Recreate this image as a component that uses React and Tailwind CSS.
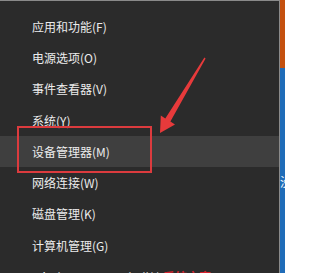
const items = [
  "应用和功能(F)",
  "电源选项(O)",
  "事件查看器(V)",
  "系统(Y)",
  "设备管理器(M)",
  "网络连接(W)",
  "磁盘管理(K)",
  "计算机管理(G)",
  "Windows PowerShell(I)",
];

export default function App() {
  return (
    <div
      className="relative flex h-[273px] w-[285px] overflow-hidden bg-[#2b2b2b]"
      style={{ fontFamily: '"Noto Sans CJK SC", "Liberation Sans", sans-serif' }}
    >
      {/* Context menu */}
      <div className="w-[280px] shrink-0 border-t border-r border-[#8a8a8a] pt-[10px]">
        {items.map((label, i) => (
          <div
            key={label}
            className={`flex h-[31.3px] items-center pl-[32px] text-[12px] text-[#ececec] ${
              i === 4 ? "bg-[#3f3f3f]" : ""
            }`}
          >
            {label}
          </div>
        ))}
      </div>

      {/* Desktop behind */}
      <div className="flex flex-1 flex-col">
        <div className="h-[68px] bg-[#c4500f]" />
        <div className="flex-1 bg-[#1f6cb8] pt-[108px] text-[12px] leading-none text-white">
          没
        </div>
      </div>

      {/* Annotation: red box */}
      <div className="absolute left-[17px] top-[126px] h-[47px] w-[135px] border-2 border-[#dc3b3e]" />

      {/* Annotation: arrow */}
      <svg className="absolute left-0 top-0" width="285" height="273" viewBox="0 0 285 273">
        <polygon
          points="160,133 160.8,115.5 165.3,118.5 204.4,57.6 205.6,58.4 170.4,121.5 175,124.5"
          fill="#e73a3b"
        />
      </svg>

      {/* Watermark */}
      <div className="absolute left-[163px] top-[268px] text-[12px] font-bold text-[#d4232e]">
        系统之家
      </div>
    </div>
  );
}
